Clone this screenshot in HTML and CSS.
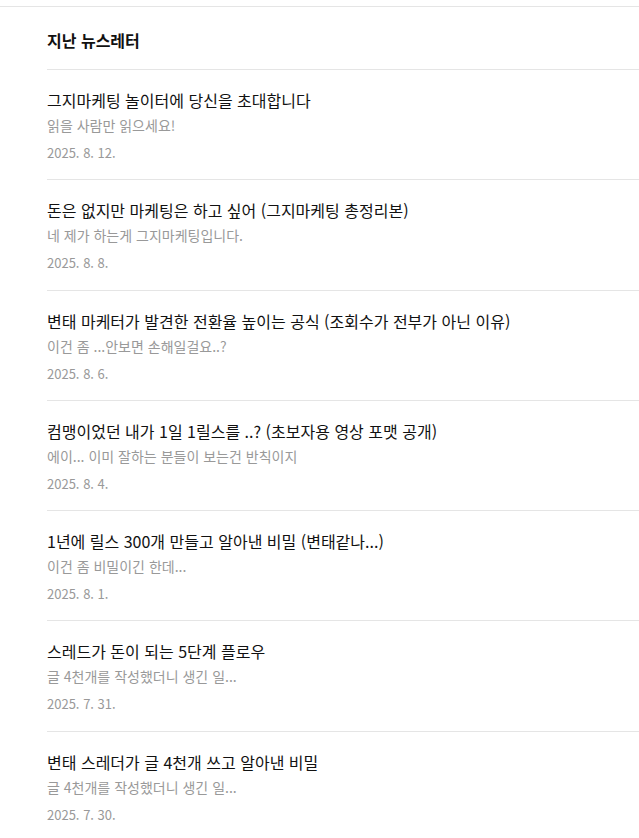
FILE: index.html
```html
<!DOCTYPE html>
<html lang="ko">
<head>
<meta charset="utf-8">
<link rel="stylesheet" href="styles.css">
</head>
<body>
<section class="archive">
  <h2 class="archive-title">지난 뉴스레터</h2>
  <ul class="list">
    <li class="item">
      <div class="title">그지마케팅 놀이터에 당신을 초대합니다</div>
      <div class="sub">읽을 사람만 읽으세요!</div>
      <div class="date">2025. 8. 12.</div>
    </li>
    <li class="item">
      <div class="title">돈은 없지만 마케팅은 하고 싶어 (그지마케팅 총정리본)</div>
      <div class="sub">네 제가 하는게 그지마케팅입니다.</div>
      <div class="date">2025. 8. 8.</div>
    </li>
    <li class="item">
      <div class="title">변태 마케터가 발견한 전환율 높이는 공식 (조회수가 전부가 아닌 이유)</div>
      <div class="sub">이건 좀 ...안보면 손해일걸요..?</div>
      <div class="date">2025. 8. 6.</div>
    </li>
    <li class="item">
      <div class="title">컴맹이었던 내가 1일 1릴스를 ..? (초보자용 영상 포맷 공개)</div>
      <div class="sub">에이... 이미 잘하는 분들이 보는건 반칙이지</div>
      <div class="date">2025. 8. 4.</div>
    </li>
    <li class="item">
      <div class="title">1년에 릴스 300개 만들고 알아낸 비밀 (변태같나...)</div>
      <div class="sub">이건 좀 비밀이긴 한데...</div>
      <div class="date">2025. 8. 1.</div>
    </li>
    <li class="item">
      <div class="title">스레드가 돈이 되는 5단계 플로우</div>
      <div class="sub">글 4천개를 작성했더니 생긴 일...</div>
      <div class="date">2025. 7. 31.</div>
    </li>
    <li class="item">
      <div class="title">변태 스레더가 글 4천개 쓰고 알아낸 비밀</div>
      <div class="sub">글 4천개를 작성했더니 생긴 일...</div>
      <div class="date">2025. 7. 30.</div>
    </li>
  </ul>
</section>
</body>
</html>
```
FILE: styles.css
```css
html, body {
  margin: 0;
  padding: 0;
  background: #fff;
}
body {
  font-family: "Noto Sans CJK KR", "Noto Sans", sans-serif;
  color: #111;
  padding-top: 6px;
}
.archive {
  border-top: 1px solid #e5e5e5;
  padding-left: 47px;
}
.archive-title {
  margin: 0;
  padding: 21px 0 17px;
  font-size: 16px;
  line-height: 24px;
  font-weight: 700;
  color: #111;
  border-bottom: 1px solid #e5e5e5;
}
.list {
  list-style: none;
  margin: 0;
  padding: 0;
}
.item {
  padding: 19px 0 17.3px;
  border-bottom: 1px solid #e5e5e5;
  display: flex;
  flex-direction: column;
}
.title {
  font-size: 16px;
  line-height: 22px;
  color: #111;
  white-space: nowrap;
}
.sub {
  margin-top: 4px;
  font-size: 14px;
  line-height: 20px;
  color: #999;
}
.date {
  margin-top: 9px;
  font-size: 13px;
  line-height: 18px;
  color: #999;
}
```
